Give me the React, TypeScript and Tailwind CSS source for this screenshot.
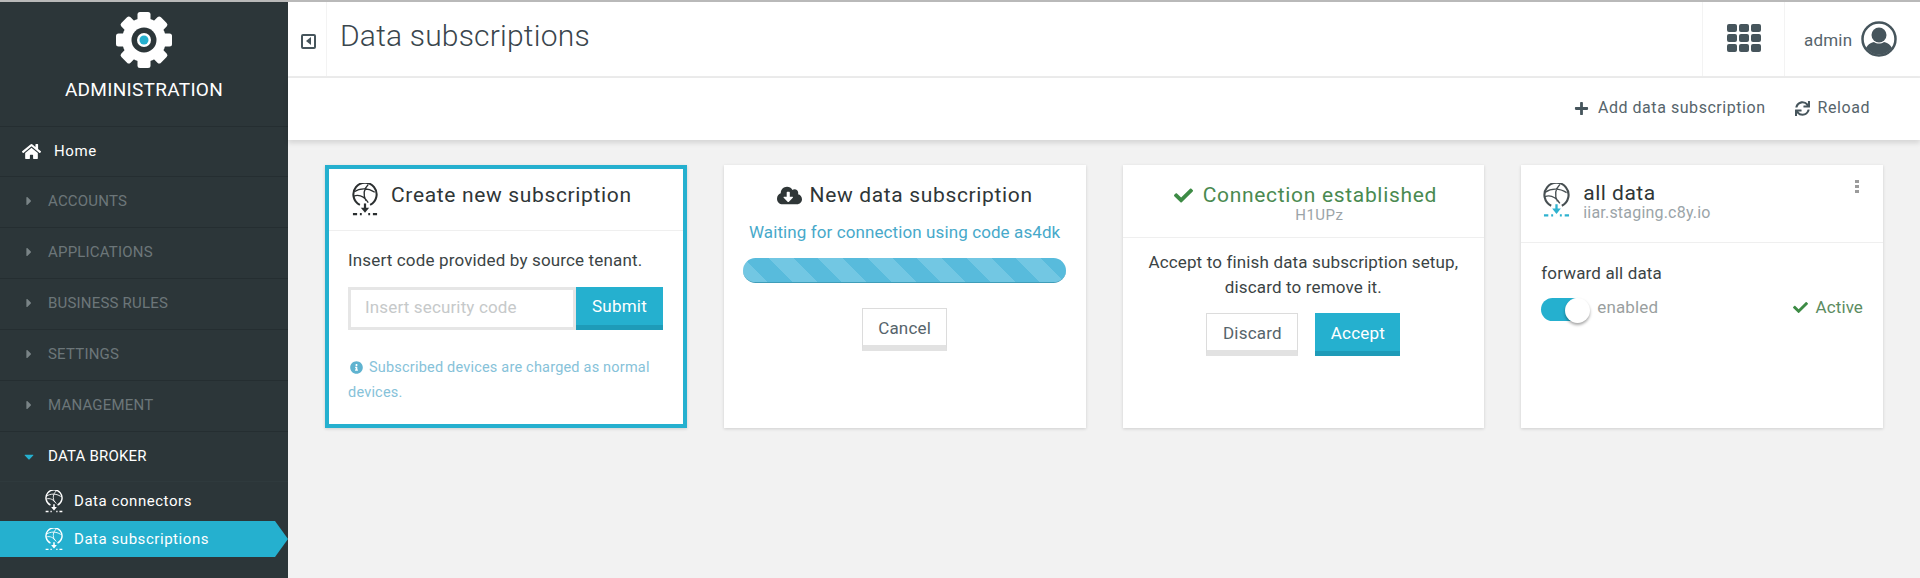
import React from "react";
import { FaHome, FaCaretRight, FaCaretDown, FaCheck, FaPlus, FaSync, FaCloudDownloadAlt, FaInfoCircle } from "react-icons/fa";

function Gear() {
  const teeth = [0, 45, 90, 135, 180, 225, 270, 315];
  return (
    <svg width="58" height="58" viewBox="0 0 58 58" className="block">
      {teeth.map((a) => (
        <rect key={a} x="22.5" y="1" width="13" height="14" rx="2.5" fill="#fff" transform={`rotate(${a} 29 29)`} />
      ))}
      <circle cx="29" cy="29" r="22" fill="#fff" />
      <circle cx="29" cy="29" r="12.5" fill="#2c3639" />
      <circle cx="29" cy="29" r="7" fill="#fff" />
      <circle cx="29" cy="29" r="4.5" fill="#25b0cf" />
    </svg>
  );
}

function Globe({ size, color, accent }: { size: number; color: string; accent: string }) {
  return (
    <svg width={size} height={size * 1.27} viewBox="0 0 28 35.500" fill="none" className="block shrink-0">
      <path d="M8.500 23.500A12.500 12.500 0 1 1 19.500 23.500" stroke={color} strokeWidth="2.200" />
      <path d="M2.500 9.500C8 5.500 17 5 24.500 10M17.500 1.500C12.500 6.500 11.500 12 15 19M2 14C8 12 13.500 15 17.500 21" stroke={color} strokeWidth="1.400" />
      <path d="M14 22v6" stroke={accent} strokeWidth="2.400" />
      <path d="M9.500 26.500h9L14 32z" fill={accent} />
      <path d="M1 33.500h4.500M8.500 33.500h2M17.500 33.500h2M22.500 33.500H27" stroke={accent} strokeWidth="2.200" />
    </svg>
  );
}

function NavRow({ label }: { label: string }) {
  return (
    <div className="flex h-[51px] items-center border-b border-[#252e31] pb-[2px] pl-[24px] text-[#6c7679]">
      <FaCaretRight className="w-[10px] text-[14px] text-[#7a8487]" />
      <span className="ml-[14px] text-[15px] tracking-[0.2px]">{label}</span>
    </div>
  );
}

function AppsGrid() {
  const cells = Array.from({ length: 9 });
  return (
    <div className="grid grid-cols-3 gap-[2px] pb-[3px]">
      {cells.map((_, i) => (
        <div key={i} className="h-[8px] w-[10px] rounded-[2px] bg-[#46555c]" />
      ))}
    </div>
  );
}

function Avatar() {
  return (
    <svg width="36" height="36" viewBox="0 0 36 36" className="block">
      <defs>
        <clipPath id="avatar-clip"><circle cx="18" cy="18" r="15.500" /></clipPath>
      </defs>
      <circle cx="18" cy="18" r="16.500" fill="#fff" stroke="#46555c" strokeWidth="2.500" />
      <g clipPath="url(#avatar-clip)" fill="#46555c">
        <circle cx="18" cy="14" r="7.500" />
        <path d="M3 36c0-10 5-14 10-15 3 2 7 2 10 0 5 1 10 5 10 15z" />
      </g>
    </svg>
  );
}

export default function App() {
  return (
    <div className="flex h-[578px] w-[1920px] flex-col overflow-hidden bg-[#f2f2f2] font-['Roboto',sans-serif] text-[#3b4748]">
      <div className="h-[2px] shrink-0 bg-[#b9b9b9]" />
      <div className="flex min-h-0 flex-1">
        <aside className="flex w-[288px] shrink-0 flex-col bg-[#2c3639] text-white">
          <div className="flex h-[125px] flex-col items-center border-b border-[#252e31] pt-[9px]">
            <Gear />
            <div className="mt-[9px] text-[19px] leading-[24px] tracking-[0.3px]">ADMINISTRATION</div>
          </div>
          <div className="flex h-[50px] items-center border-b border-[#252e31] pl-[22px]">
            <FaHome className="text-[19px]" />
            <span className="ml-[13px] text-[15px] tracking-[0.6px]">Home</span>
          </div>
          <NavRow label="ACCOUNTS" />
          <NavRow label="APPLICATIONS" />
          <NavRow label="BUSINESS RULES" />
          <NavRow label="SETTINGS" />
          <NavRow label="MANAGEMENT" />
          <div className="flex h-[50px] items-center border-b border-[#2f3a3d] pl-[23px]">
            <FaCaretDown className="w-[12px] text-[15px] text-[#25b0cf]" />
            <span className="ml-[13px] text-[15px] tracking-[0.2px]">DATA BROKER</span>
          </div>
          <div className="flex h-[39px] items-center pl-[45px]">
            <Globe size={18} color="#fff" accent="#fff" />
            <span className="ml-[11px] text-[15px] tracking-[0.55px]">Data connectors</span>
          </div>
          <div className="flex h-[36px] items-center bg-[#25b0cf] pl-[45px] [clip-path:polygon(0_0,275px_0,288px_50%,275px_100%,0_100%)]">
            <Globe size={18} color="#fff" accent="#fff" />
            <span className="ml-[11px] text-[15px] tracking-[0.55px]">Data subscriptions</span>
          </div>
        </aside>

        <main className="flex min-w-0 flex-1 flex-col">
          <header className="flex h-[76px] shrink-0 items-stretch border-b-2 border-[#ececec] bg-white">
            <div className="flex w-[39px] items-center justify-center border-r border-[#f3f3f3] pl-[2px] pt-[4px]">
              <div className="flex h-[15px] w-[15px] items-center justify-center rounded-[2px] border-2 border-[#46555c]">
                <div className="h-0 w-0 border-y-[4px] border-r-[5px] border-y-transparent border-r-[#46555c]" />
              </div>
            </div>
            <h1 className="ml-[13px] pt-[14px] text-[30px] font-light leading-[40px] tracking-[0.2px] text-[#3a464d]">Data subscriptions</h1>
            <div className="ml-auto flex w-[83px] items-center justify-center border-x border-[#f3f3f3]"><AppsGrid /></div>
            <div className="flex w-[135px] items-center pl-[19px]">
              <span className="pt-[3px] text-[17px] tracking-[0.2px] text-[#56646b]">admin</span>
              <span className="ml-[9px]"><Avatar /></span>
            </div>
          </header>
          <div className="flex h-[62px] shrink-0 items-center justify-end bg-white pb-[2px] pr-[50px] text-[16px] tracking-[0.55px] text-[#56646b] shadow-[0_3px_5px_rgba(0,0,0,0.12)]">
            <FaPlus className="text-[15px] text-[#46555c]" />
            <span className="ml-[9px]">Add data subscription</span>
            <FaSync className="ml-[29px] text-[15px] text-[#46555c]" />
            <span className="ml-[8px]">Reload</span>
          </div>

          <div className="grid flex-1 grid-cols-4 items-start gap-[37px] px-[37px] pt-[25px]">
            {/* Create */}
            <section className="h-[263px] border-[4px] border-[#25b0cf] bg-white shadow-[0_1px_3px_rgba(0,0,0,0.15)]">
              <div className="flex h-[62px] items-center gap-[13px] border-b border-[#efefef] pl-[23px]">
                <Globe size={26} color="#2b2f30" accent="#2b2f30" />
                <span className="pb-[8px] text-[21px] tracking-[0.65px] text-[#2f3637]">Create new subscription</span>
              </div>
              <div className="px-[19px] pt-[18px]">
                <p className="text-[17px] leading-[22px] tracking-[0.15px] text-[#3b4445]">Insert code provided by source tenant.</p>
                <div className="mt-[16px] flex h-[43px]">
                  <div className="flex w-[228px] items-center border-[3px] border-[#e6e6e6] pb-[2px] pl-[14px] text-[17px] tracking-[0.15px] text-[#c6c9ca]">Insert security code</div>
                  <div className="flex w-[87px] items-center justify-center border-b-[5px] border-[#1e9bb8] bg-[#25b0cf] pt-[2px] text-[17px] tracking-[0.2px] text-white">Submit</div>
                </div>
                <p className="mt-[25px] text-[14.500px] leading-[25px] tracking-[0.2px] text-[#86c2d9]">
                  <FaInfoCircle className="mb-[2px] ml-[2px] mr-[6px] inline text-[13px] text-[#5fb3d0]" />
                  Subscribed devices are charged as normal devices.
                </p>
              </div>
            </section>

            {/* Waiting */}
            <section className="flex h-[263px] flex-col items-center bg-white shadow-[0_1px_3px_rgba(0,0,0,0.15)]">
              <div className="mt-[16px] flex items-center gap-[8px] text-[21px] leading-[28px] tracking-[0.65px] text-[#2f3637]">
                <FaCloudDownloadAlt className="text-[25px] text-[#2f3637]" />
                New data subscription
              </div>
              <div className="mt-[12px] text-[17px] leading-[22px] tracking-[0.1px] text-[#47a9ca]">Waiting for connection using code as4dk</div>
              <div className="mt-[15px] h-[25px] w-[323px] rounded-full border-b border-[#3f9db9] bg-[repeating-linear-gradient(45deg,#72c7e3_0,#72c7e3_17.500px,#58bbdc_17.500px,#58bbdc_35px)]" />
              <div className="mt-[25px] flex h-[43px] w-[85px] items-center justify-center border border-b-[6px] border-[#dcdcdc] border-b-[#e2e2e2] pt-[3px] text-[17px] tracking-[0.2px] text-[#56646b]">Cancel</div>
            </section>

            {/* Connection */}
            <section className="h-[263px] bg-white shadow-[0_1px_3px_rgba(0,0,0,0.15)]">
              <div className="flex h-[73px] flex-col items-center border-b border-[#efefef] pt-[16px]">
                <div className="flex items-center gap-[10px] pl-[4px] text-[21px] leading-[28px] tracking-[0.68px] text-[#4a8a50]">
                  <FaCheck className="text-[19px] text-[#3d8b45]" />
                  Connection established
                </div>
                <div className="-mt-[3px] pl-[32px] text-[15px] leading-[18px] tracking-[0.5px] text-[#9ba4a8]">H1UPz</div>
              </div>
              <p className="mt-[12px] text-center text-[17px] leading-[25px] tracking-[0.15px] text-[#3b4445]">
                Accept to finish data subscription setup,
                <br />
                discard to remove it.
              </p>
              <div className="mt-[13px] flex justify-center gap-[17px]">
                <div className="flex h-[43px] w-[92px] items-center justify-center border border-b-[6px] border-[#dcdcdc] border-b-[#e2e2e2] pt-[3px] text-[17px] tracking-[0.2px] text-[#56646b]">Discard</div>
                <div className="flex h-[43px] w-[85px] items-center justify-center border-b-[5px] border-[#1e9bb8] bg-[#25b0cf] pt-[3px] text-[17px] tracking-[0.2px] text-white">Accept</div>
              </div>
            </section>

            {/* All data */}
            <section className="relative h-[263px] bg-white shadow-[0_1px_3px_rgba(0,0,0,0.15)]">
              <div className="flex h-[78px] items-start gap-[13px] border-b border-[#efefef] pl-[22px] pt-[18px]">
                <Globe size={27} color="#474f52" accent="#2fb2cf" />
                <div className="-mt-[3px]">
                  <div className="text-[21px] leading-[26px] tracking-[0.5px] text-[#2f3637]">all data</div>
                  <div className="-mt-[3px] text-[16px] leading-[20px] tracking-[0.2px] text-[#9ba4a8]">iiar.staging.c8y.io</div>
                </div>
              </div>
              <div className="absolute right-[24px] top-[15px] flex flex-col gap-[2px]">
                <span className="h-[3px] w-[4px] bg-[#9b9b9b]" />
                <span className="h-[3px] w-[4px] bg-[#9b9b9b]" />
                <span className="h-[3px] w-[4px] bg-[#9b9b9b]" />
              </div>
              <div className="px-[20px] pt-[19px]">
                <p className="text-[17px] leading-[22px] tracking-[0.15px] text-[#3b4445]">forward all data</p>
                <div className="mt-[12px] flex items-center">
                  <div className="relative h-[23px] w-[42px] rounded-full bg-[#25b0cf]">
                    <div className="absolute -right-[7px] top-[0px] h-[25px] w-[25px] rounded-full bg-white shadow-[0_2px_3px_rgba(0,0,0,0.35)]" />
                  </div>
                  <span className="ml-[14px] pb-[4px] text-[17px] leading-[22px] tracking-[0.15px] text-[#9a9f9f]">enabled</span>
                  <span className="ml-auto flex items-center pb-[4px] text-[17px] leading-[22px] tracking-[0.1px] text-[#5c8c61]">
                    <FaCheck className="mr-[8px] text-[15px] text-[#3d8b45]" />
                    Active
                  </span>
                </div>
              </div>
            </section>
          </div>
        </main>
      </div>
    </div>
  );
}
